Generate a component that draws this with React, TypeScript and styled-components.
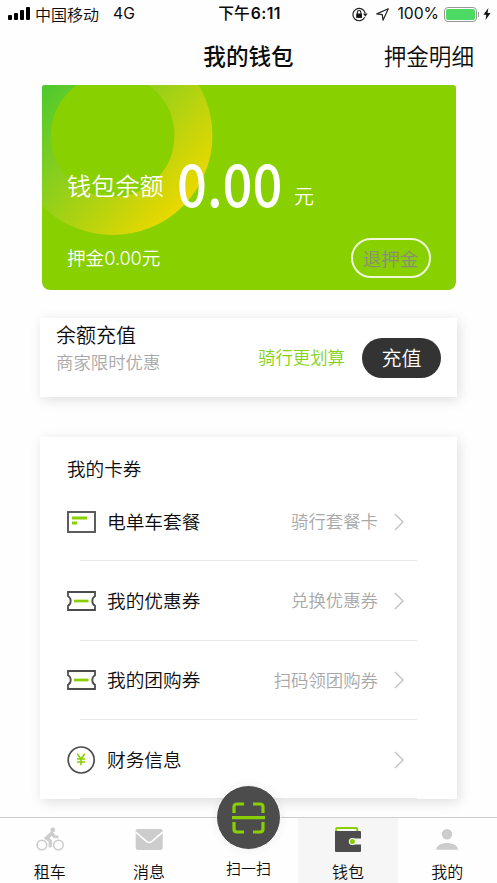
import React from "react";
import styled, { createGlobalStyle } from "styled-components";

const GlobalStyle = createGlobalStyle`
  * { box-sizing: border-box; }
  body {
    margin: 0;
    background: #fefefe;
    color: #0c0c0c;
    font-family: "Noto Sans CJK SC", sans-serif;
    font-weight: 350;
  }
  svg { display: block; flex: none; }
`;

const Screen = styled.div`
  width: 497px;
  height: 883px;
  overflow: hidden;
  display: flex;
  flex-direction: column;
`;

const StatusBar = styled.header`
  height: 28px;
  flex: none;
  display: grid;
  grid-template-columns: 1fr auto 1fr;
  align-items: center;
  padding: 0 6px 0 8px;
  font-size: 16px;
  line-height: 26px;
`;

const StatusGroup = styled.div`
  display: flex;
  align-items: center;
`;

const Carrier = styled.span`
  margin: -1px 0 0 4px;
`;

const Latin = styled.span<{ $left: number }>`
  margin-left: ${(p) => p.$left}px;
  font-family: Inter, sans-serif;
  font-size: 15.7px;
  font-weight: 400;
`;

const Clock = styled.span`
  font-weight: 500;
  font-size: 15.8px;
  margin-top: -1px;
`;

const ClockDigits = styled.span`
  margin-left: 1px;
  font-family: Inter, sans-serif;
  font-weight: 600;
  letter-spacing: 0.35px;
`;

const StatusIcons = styled(StatusGroup)`
  justify-content: flex-end;
`;

const Battery = styled.div`
  width: 33px;
  height: 15px;
  margin-left: 5px;
  padding: 1px;
  border: 1px solid #999;
  border-radius: 4px;
`;

const BatteryLevel = styled.div`
  height: 100%;
  border-radius: 2px;
  background: #4cd964;
`;

const BatteryTip = styled.div`
  width: 1px;
  height: 5px;
  margin: 0 4px 0 1px;
  background: #999;
`;

const NavBar = styled.nav`
  height: 57px;
  flex: none;
  display: grid;
  grid-template-columns: 1fr auto 1fr;
  align-items: center;
  padding: 0 23px 2px;
`;

const Title = styled.h1`
  grid-column: 2;
  margin: 0;
  font-size: 22.6px;
  font-weight: 500;
  line-height: 32px;
`;

const NavLink = styled.span`
  justify-self: end;
  font-size: 22.6px;
  line-height: 32px;
`;

const Body = styled.main`
  flex: 1;
  min-height: 0;
  display: flex;
  flex-direction: column;
  padding: 0 40px;
`;

const BalanceCard = styled.section`
  position: relative;
  height: 205px;
  flex: none;
  margin: 0 1.5px 0 2px;
  padding: 76px 25px 0;
  border-radius: 3px 3px 8px 8px;
  overflow: hidden;
  background: #89d000;
  color: #fff;
`;

const Ring = styled.svg`
  position: absolute;
  left: 0;
  top: 0;
`;

const BalanceRow = styled.div`
  position: relative;
  display: flex;
  height: 77px;
`;

const BalanceLabel = styled.span`
  font-size: 24.2px;
  line-height: 48px;
  width: 110px;
`;

const Amount = styled.span`
  width: 104px;
  margin-top: -3px;
  font-size: 59px;
  font-weight: 500;
  line-height: 48px;
  white-space: nowrap;
  transform: scaleX(0.89);
  transform-origin: left center;
`;

const Unit = styled.span`
  margin-left: 13px;
  padding-top: 11px;
  font-size: 20px;
  line-height: 48px;
`;

const DepositRow = styled.div`
  position: relative;
  display: flex;
  justify-content: space-between;
  align-items: center;
  height: 40px;
  font-size: 18.6px;
  line-height: 38px;
`;

const DepositText = styled.span`
  margin-top: -2px;
`;

const DepositDigits = styled.span`
  font-family: Inter, sans-serif;
  font-size: 18.2px;
  letter-spacing: -0.1px;
`;

const RefundButton = styled.button`
  width: 80px;
  height: 40px;
  padding: 0;
  border: 2px solid #eef8da;
  border-radius: 20px;
  background: none;
  color: #8b8b7c;
  font: inherit;
  line-height: 34px;
`;

const Panel = styled.section`
  flex: none;
  width: 417px;
  background: #fff;
  box-shadow: 2px 3px 12px rgba(0, 0, 0, 0.13);
`;

const RechargePanel = styled(Panel)`
  display: flex;
  height: 79px;
  margin-top: 28px;
  padding: 0 16px;
`;

const RechargeText = styled.div`
  flex: 1;
  padding-top: 2px;
`;

const RechargeTitle = styled.div`
  font-size: 20px;
  line-height: 29px;
`;

const RechargeHint = styled.div`
  font-size: 17.4px;
  line-height: 26px;
  color: #a8a8a8;
`;

const Slogan = styled.span`
  font-size: 17.4px;
  line-height: 77px;
  margin-right: 17px;
  color: #84d214;
`;

const RechargeButton = styled.button`
  align-self: center;
  width: 79px;
  height: 40px;
  padding: 0;
  border: 0;
  border-radius: 20px;
  background: #333;
  color: #fff;
  font: inherit;
  font-size: 20px;
  line-height: 40px;
`;

const CouponPanel = styled(Panel)`
  height: 362px;
  margin-top: 40px;
  padding: 18px 40px 0 27px;
`;

const CouponTitle = styled.h2`
  margin: 0;
  height: 27px;
  font-size: 18.6px;
  font-weight: inherit;
  line-height: 26px;
`;

const CouponRow = styled.div`
  display: grid;
  grid-template-columns: 29px 1fr auto 10px;
  align-items: center;
  height: 78.3px;
  padding: 1px 13px 0 0;
  line-height: 30px;
`;

const Divider = styled.hr`
  height: 1px;
  margin: 0 0 0 13px;
  border: 0;
  background: #e8e8e8;
`;

const RowLabel = styled.span`
  margin: -2px 0 0 11px;
  font-size: 18.7px;
`;

const RowHint = styled.span`
  margin: -1px 16px 0 0;
  font-size: 17.4px;
  color: #a8a8a8;
`;

const TabBar = styled.footer`
  height: 66px;
  flex: none;
  display: grid;
  grid-template-columns: repeat(5, 1fr);
  border-top: 1px solid #ccc;
  background: #fefefe;
`;

const Tab = styled.div<{ $active?: boolean }>`
  display: flex;
  flex-direction: column;
  align-items: center;
  padding-top: 8px;
  background: ${(p) => (p.$active ? "#f6f6f6" : "transparent")};
`;

const TabLabel = styled.span`
  margin-top: 5px;
  font-size: 16px;
  line-height: 24px;
`;

const ScanTab = styled.div`
  position: relative;
  display: flex;
  justify-content: center;
  padding-top: 38px;
  font-size: 15px;
  line-height: 24px;
`;

const ScanButton = styled.div`
  position: absolute;
  top: -33px;
  left: 17px;
  width: 65px;
  height: 65px;
  display: grid;
  place-items: center;
  border: 1px solid #fff;
  border-radius: 50%;
  background: #4c4c4c;
  box-shadow: 0 0 7px 3px rgba(0, 0, 0, 0.035);
`;

const SignalIcon = () => (
  <svg width="23" height="14" viewBox="0 0 23 14" fill="#000">
    <rect x="0" y="8" width="4" height="5" rx="1" />
    <rect x="6" y="6" width="4" height="7" rx="1" />
    <rect x="12" y="3" width="4" height="10" rx="1" />
    <rect x="18" y="0" width="4" height="13" rx="1" />
  </svg>
);

const LockIcon = () => (
  <svg width="16" height="15" viewBox="0 0 16 15" fill="none" stroke="#222" strokeWidth="1.2">
    <path d="M12.7 10.3A6.2 6.2 0 1 1 13.2 6.2" />
    <path d="M11 6.4h4.7l-2.4 3.3z" fill="#222" stroke="none" />
    <rect x="4.2" y="6.5" width="5.8" height="4.4" fill="#111" stroke="none" />
    <path d="M5.4 6.8V5.2a1.7 1.7 0 0 1 3.4 0v1.6" />
  </svg>
);

const LocationIcon = styled.svg.attrs({
  width: 13,
  height: 13,
  viewBox: "0 0 13 13",
  children: <path d="M12.3.8L.8 5.9l5.5.8.7 5.5z" />,
})`
  margin-left: 8px;
  fill: none;
  stroke: #222;
  stroke-width: 1.2;
  stroke-linejoin: round;
`;

const BoltIcon = () => (
  <svg width="8" height="12" viewBox="0 0 8 12">
    <path d="M5.4 0L.4 6.7h2.9L2.5 12l5-7H4.5z" fill="#111" />
  </svg>
);

const CardIcon = () => (
  <svg width="29" height="22" viewBox="0 0 29 22">
    <rect x="1" y="1" width="27" height="20" fill="none" stroke="#4c4c4c" strokeWidth="1.8" />
    <path d="M5 7h15M5 12h5" stroke="#89d000" strokeWidth="2.9" />
  </svg>
);

const TicketIcon = () => (
  <svg width="29" height="20" viewBox="0 0 29 20" fill="none">
    <path
      d="M1 1H28V5.2Q25.3 6.5 25.3 10T28 14.8V19H1V14.8Q3.7 13.5 3.7 10T1 5.2Z"
      stroke="#4c4c4c"
      strokeWidth="1.8"
    />
    <path d="M7 10h14.5" stroke="#89d000" strokeWidth="2.7" />
  </svg>
);

const YuanIcon = () => (
  <svg width="29" height="28" viewBox="0 0 29 28" fill="none">
    <circle cx="14.2" cy="14" r="13" stroke="#4c4c4c" strokeWidth="1.7" />
    <path d="M10.2 7.6l3.8 5.4 3.8-5.4M14 13v6.3M10 13h8M10 16h8" stroke="#89d000" strokeWidth="1.6" />
  </svg>
);

const Chevron = () => (
  <svg width="10" height="18" viewBox="0 0 10 18" fill="none">
    <path d="M1 1l8 8-8 8" stroke="#bfbfbf" strokeWidth="1.3" />
  </svg>
);

const BikeIcon = () => (
  <svg width="28" height="28" viewBox="0 0 28 28" fill="none" stroke="#ccc">
    <circle cx="5.9" cy="19" r="4.8" strokeWidth="1.6" />
    <circle cx="22.4" cy="19" r="4.8" strokeWidth="1.6" />
    <circle cx="16.8" cy="4" r="2.4" fill="#ccc" stroke="none" />
    <path
      d="M14.8 6.2L8.2 12.2l4.9 3.2V21h2.3v-7l-2.6-2 3-2.6 2 2.3h4.2v-1.8h-3l-2.4-3.7z"
      fill="#ccc"
      strokeWidth=".9"
      strokeLinejoin="round"
    />
  </svg>
);

const MailIcon = () => (
  <svg width="28" height="28" viewBox="0 0 28 28">
    <rect x=".7" y="3" width="27" height="21" rx="2" fill="#ccc" />
    <path d="M.7 6.2L11.5 15.4Q14.2 17.5 16.9 15.4L27.7 6.2" stroke="#fff" strokeWidth="1.6" fill="none" />
  </svg>
);

const WalletIcon = () => (
  <svg width="28" height="28" viewBox="0 0 28 28">
    <path d="M2.2 6V3q0-1 1-1h19q1 0 1 1v3" fill="none" stroke="#89d000" strokeWidth="2" />
    <path d="M1 5h25q1 0 1 1v6.5h-8a3 3 0 0 0 0 6h8V25q0 1-1 1H2q-1 0-1-1z" fill="#4c4c4c" />
    <circle cx="18.4" cy="15.5" r="3.6" fill="#f6f6f6" />
    <circle cx="18.4" cy="15.5" r="2.5" fill="#89d000" />
  </svg>
);

const UserIcon = () => (
  <svg width="28" height="28" viewBox="0 0 28 28" fill="#ccc">
    <circle cx="14" cy="8.3" r="5.2" />
    <path d="M3.2 23.8c0-4.2 5.2-6.8 10.9-6.8S25 19.6 25 23.8z" />
  </svg>
);

const ScanIcon = () => (
  <svg width="33" height="32" viewBox="0 0 33 32" fill="none" stroke="#89d000" strokeWidth="3.2">
    <path d="M12 2H5Q2 2 2 5v6M21 2h7q3 0 3 3v6M12 30H5q-3 0-3-3v-7M21 30h7q3 0 3-3v-7M0 15.6h33" />
  </svg>
);

const coupons = [
  { icon: <CardIcon />, label: "电单车套餐", hint: "骑行套餐卡" },
  { icon: <TicketIcon />, label: "我的优惠券", hint: "兑换优惠券" },
  { icon: <TicketIcon />, label: "我的团购券", hint: "扫码领团购券" },
  { icon: <YuanIcon />, label: "财务信息", hint: "" },
];

export default function App() {
  return (
    <>
      <GlobalStyle />
      <Screen>
        <StatusBar>
          <StatusGroup>
            <SignalIcon />
            <Carrier>中国移动</Carrier>
            <Latin $left={14}>4G</Latin>
          </StatusGroup>
          <Clock>
            下午<ClockDigits>6:11</ClockDigits>
          </Clock>
          <StatusIcons>
            <LockIcon />
            <LocationIcon />
            <Latin $left={8}>100%</Latin>
            <Battery>
              <BatteryLevel />
            </Battery>
            <BatteryTip />
            <BoltIcon />
          </StatusIcons>
        </StatusBar>

        <NavBar>
          <Title>我的钱包</Title>
          <NavLink>押金明细</NavLink>
        </NavBar>

        <Body>
          <BalanceCard>
            <Ring width="180" height="160" viewBox="0 0 180 160">
              <defs>
                <linearGradient id="ring" gradientUnits="userSpaceOnUse" x1="0" y1="0" x2="137" y2="121">
                  <stop offset="0" stopColor="#4cc92f" />
                  <stop offset="1" stopColor="#e8d800" />
                </linearGradient>
              </defs>
              <circle cx="70.7" cy="50.4" r="80.7" fill="none" stroke="url(#ring)" strokeWidth="38" />
            </Ring>
            <BalanceRow>
              <BalanceLabel>钱包余额</BalanceLabel>
              <Amount>0.00</Amount>
              <Unit>元</Unit>
            </BalanceRow>
            <DepositRow>
              <DepositText>
                押金<DepositDigits>0.00</DepositDigits>元
              </DepositText>
              <RefundButton>退押金</RefundButton>
            </DepositRow>
          </BalanceCard>

          <RechargePanel>
            <RechargeText>
              <RechargeTitle>余额充值</RechargeTitle>
              <RechargeHint>商家限时优惠</RechargeHint>
            </RechargeText>
            <Slogan>骑行更划算</Slogan>
            <RechargeButton>充值</RechargeButton>
          </RechargePanel>

          <CouponPanel>
            <CouponTitle>我的卡券</CouponTitle>
            {coupons.map((c) => (
              <React.Fragment key={c.label}>
                <CouponRow>
                  {c.icon}
                  <RowLabel>{c.label}</RowLabel>
                  <RowHint>{c.hint}</RowHint>
                  <Chevron />
                </CouponRow>
                <Divider />
              </React.Fragment>
            ))}
          </CouponPanel>
        </Body>

        <TabBar>
          <Tab>
            <BikeIcon />
            <TabLabel>租车</TabLabel>
          </Tab>
          <Tab>
            <MailIcon />
            <TabLabel>消息</TabLabel>
          </Tab>
          <ScanTab>
            <ScanButton>
              <ScanIcon />
            </ScanButton>
            扫一扫
          </ScanTab>
          <Tab $active>
            <WalletIcon />
            <TabLabel>钱包</TabLabel>
          </Tab>
          <Tab>
            <UserIcon />
            <TabLabel>我的</TabLabel>
          </Tab>
        </TabBar>
      </Screen>
    </>
  );
}
